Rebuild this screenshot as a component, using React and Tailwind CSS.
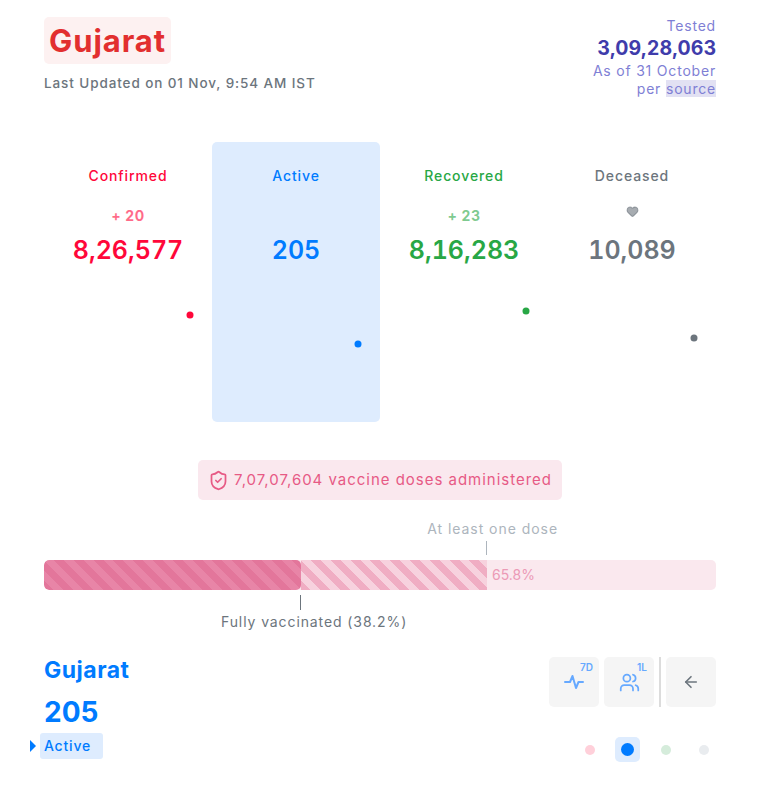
import React from "react";
import { ArrowLeft, Users, ShieldCheck, Heart } from "lucide-react";

const cards = [
  { name: "Confirmed", delta: "+ 20", value: "8,26,577", text: "text-[#ff073a]", deltaText: "text-[#ff073a]/60", dot: "fill-[#ff073a]", cy: 173, cx: 146 },
  { name: "Active", delta: "", value: "205", text: "text-[#007bff]", deltaText: "", dot: "fill-[#007bff]", cy: 202, cx: 146, active: true },
  { name: "Recovered", delta: "+ 23", value: "8,16,283", text: "text-[#28a745]", deltaText: "text-[#28a745]/60", dot: "fill-[#28a745]", cy: 169, cx: 146 },
  { name: "Deceased", delta: "heart", value: "10,089", text: "text-[#6c757d]", deltaText: "text-[#6c757d]/60", dot: "fill-[#6c757d]", cy: 196, cx: 146 },
];

const StatCard = ({ card }) => (
  <div className={`relative h-[280px] rounded-[5px] flex flex-col items-center ${card.active ? "bg-[#deecfe]" : ""}`}>
    <div className={`mt-[25px] h-[18px] leading-[18px] text-[14px] font-medium tracking-[0.9px] ${card.text}`}>{card.name}</div>
    <div className={`mt-[22px] h-[18px] leading-[18px] text-[14px] font-bold tracking-[0.6px] ${card.deltaText}`}>
      {card.delta === "heart" ? <Heart size={13} className="-mt-[2px] fill-current" /> : card.delta}
    </div>
    <div className={`mt-[8px] h-[34px] leading-[34px] text-[25px] font-semibold tabular-nums ${card.text}`}>{card.value}</div>
    {/* dot sits at the end of the sparkline */}
    <svg className="absolute inset-0" width="168" height="280">
      <circle cx={card.cx} cy={card.cy} r="3.5" className={card.dot} />
    </svg>
  </div>
);

const App = () => {
  return (
    <div className="w-[762px] h-[796px] bg-white pl-[44px] pr-[46px] font-['Inter',sans-serif] overflow-hidden">
      {/* HEADER */}
      <div className="flex justify-between pt-[17px] h-[142px]">
        <div>
          <h1 className="w-[127px] h-[47px] leading-[47px] rounded-[5px] bg-[#fdf1f1] text-center text-[31px] font-bold tracking-[0.9px] text-[#e22f2f]">Gujarat</h1>
          <p className="mt-[10px] leading-[18px] text-[13.5px] font-medium tracking-[0.9px] text-[#6c757d]">Last Updated on 01 Nov, 9:54 AM IST</p>
        </div>
        <div className="text-right text-[14px] tracking-[0.8px] text-[#7f7fd5]">
          <div className="leading-[18px]">Tested</div>
          <div className="leading-[27px] text-[19.5px] font-bold tracking-normal text-[#3f3cab]">3,09,28,063</div>
          <div className="leading-[18px]">As of 31 October</div>
          <div className="leading-[18px]">per <span className="bg-[#e2e1f3]">source</span></div>
        </div>
      </div>

      {/* STATS */}
      <div className="grid grid-cols-4">
        {cards.map((card) => (
          <StatCard key={card.name} card={card} />
        ))}
      </div>

      {/* VACCINE PILL */}
      <div className="flex justify-center mt-[38px]">
        <div className="h-[40px] w-[364px] rounded-[5px] bg-[#fae8ee] flex items-center justify-center gap-[5px] text-[15px] tracking-[0.98px] text-[#e75a85]">
          <ShieldCheck size={21} strokeWidth={2} />
          <span>7,07,07,604 vaccine doses administered</span>
        </div>
      </div>

      {/* PROGRESS */}
      <div className="flex flex-col items-end pr-[158px] mt-[20px]">
        <div className="leading-[18px] text-[14px] tracking-[0.95px] text-[#adb5bd]">At least one dose</div>
        <div className="mr-[71px] mt-[3px] w-px h-[14px] bg-[#adb5bd]" />
      </div>
      <div className="mt-[5px] h-[30px] rounded-[5px] bg-[#fae8ee] flex overflow-hidden">
        <div className="w-[257px] rounded-[5px] bg-[repeating-linear-gradient(45deg,#e3769b_0,#e3769b_7px,#e885a7_7px,#e885a7_14px)]" />
        <div className="w-[186px] bg-[repeating-linear-gradient(45deg,#f0adc3_0,#f0adc3_7px,#f7d2de_7px,#f7d2de_14px)]" />
        <div className="ml-[5px] leading-[30px] text-[14px] text-[#ec9ab6]">65.8%</div>
      </div>
      <div className="ml-[256px] mt-[5px] w-px h-[15px] bg-[#6c757d]" />
      <div className="ml-[177px] mt-[3px] leading-[18px] text-[14px] tracking-[0.9px] text-[#6c757d]">Fully vaccinated (38.2%)</div>

      {/* MINI CHART HEADER */}
      <div className="flex justify-between mt-[26px]">
        <div>
          <div className="leading-[26px] text-[23px] font-bold tracking-[0.5px] text-[#007bff]">Gujarat</div>
          <div className="mt-[10px] leading-[38px] text-[28px] font-bold text-[#007bff]">205</div>
          <div className="relative -ml-[4px] mt-[2px] w-[63px] h-[26px] leading-[26px] pl-[4px] rounded-[3px] bg-[#deecfe] text-[14px] font-medium tracking-[0.8px] text-[#007bff]">
            Active
            <span className="absolute -left-[10px] top-[7px] w-0 h-0 border-y-[6px] border-y-transparent border-l-[6px] border-l-[#007bff]" />
          </div>
        </div>
        <div className="flex flex-col items-end">
          <div className="flex">
            <div className="relative w-[50px] h-[50px] rounded-[5px] bg-[#f5f5f5] flex items-center justify-center text-[#66a9ff]">
              <svg width="20" height="16" viewBox="0 0 20 16" fill="none" stroke="currentColor" strokeWidth="2" strokeLinecap="round" strokeLinejoin="round">
                <path d="M1 8h5l2.5-6 3.5 12 2.5-6h4.5" />
              </svg>
              <span className="absolute right-[6px] top-[4px] text-[10px] leading-[12px] font-semibold">7D</span>
            </div>
            <div className="relative ml-[5px] w-[50px] h-[50px] rounded-[5px] bg-[#f5f5f5] flex items-center justify-center text-[#66a9ff]">
              <Users size={21} strokeWidth={2} />
              <span className="absolute right-[7px] top-[4px] text-[10px] leading-[12px] font-semibold">1L</span>
            </div>
            <div className="ml-[5px] w-[2px] h-[50px] bg-[#dcdcdc]" />
            <div className="ml-[5px] w-[50px] h-[50px] rounded-[5px] bg-[#f5f5f5] flex items-center justify-center text-[#6c757d]">
              <ArrowLeft size={18} strokeWidth={2.2} />
            </div>
          </div>
          <div className="mt-[30px] flex items-center mr-[7px]">
            <span className="w-[10px] h-[10px] rounded-full bg-[#ffd0da]" />
            <span className="ml-[20px] w-[25px] h-[25px] rounded-[5px] bg-[#deecfe] flex items-center justify-center">
              <span className="w-[13px] h-[13px] rounded-full bg-[#007bff]" />
            </span>
            <span className="ml-[21px] w-[10px] h-[10px] rounded-full bg-[#d5ecdb]" />
            <span className="ml-[28px] w-[10px] h-[10px] rounded-full bg-[#e9ecef]" />
          </div>
        </div>
      </div>
    </div>
  );
};

export default App;
